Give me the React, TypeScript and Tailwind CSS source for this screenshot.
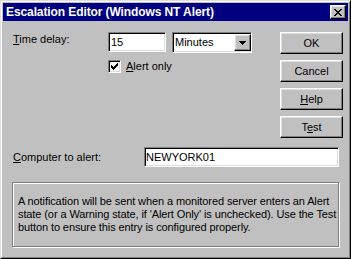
import React from "react";

const raised =
  "border border-t-white border-l-white border-r-black border-b-black shadow-[inset_-1px_-1px_0_#808080,inset_1px_1px_0_#dfdfdf]";
const sunken =
  "border border-t-[#808080] border-l-[#808080] border-r-white border-b-white shadow-[inset_1px_1px_0_#000,inset_-1px_-1px_0_#dfdfdf]";

function Btn({ children }: { children: React.ReactNode }) {
  return (
    <div className={`${raised} bg-[#c0c0c0] w-[63px] h-[22px] flex items-center justify-center text-black`}>
      {children}
    </div>
  );
}

export default function App() {
  return (
    <div
      className="w-[351px] h-[259px] bg-[#c0c0c0] border border-t-[#dfdfdf] border-l-[#dfdfdf] border-r-black border-b-black text-[11px] leading-[13px] text-black"
      style={{ fontFamily: '"Liberation Sans", Arial, sans-serif' }}
    >
      <div className="h-full border border-t-white border-l-white border-r-[#808080] border-b-[#808080] p-px flex flex-col">
        {/* Title bar */}
        <div className="h-[18px] bg-[#000080] flex items-center pl-[3px] pr-[2px]">
          <span className="text-white font-bold text-[12px] leading-[14px] whitespace-nowrap tracking-[-0.1px]">
            Escalation Editor (Windows NT Alert)
          </span>
          <div className={`${raised} ml-auto bg-[#c0c0c0] w-[16px] h-[14px] flex items-center justify-center`}>
            <svg width="8" height="7" viewBox="0 0 8 7" shapeRendering="crispEdges">
              <path
                d="M0 0h2v1H0zM6 0h2v1H6zM1 1h2v1H1zM5 1h2v1H5zM2 2h4v1H2zM3 3h2v1H3zM2 4h4v1H2zM1 5h2v1H1zM5 5h2v1H5zM0 6h2v1H0zM6 6h2v1H6z"
                fill="#000"
              />
            </svg>
          </div>
        </div>

        {/* Top section */}
        <div className="flex items-start mt-[11px] pl-[10px]">
          <div className="flex flex-col">
            <div className="flex items-start">
              <div className="w-[95px] pt-[1px] whitespace-nowrap">
                <span className="underline">T</span>ime delay:
              </div>
              <div className={`${sunken} bg-white w-[58px] h-[20px] flex items-center pl-[2px]`}>15</div>
              <div className={`${sunken} bg-white w-[80px] h-[21px] ml-[6px] flex items-center`}>
                <span className="pl-[2px] flex-1">Minutes</span>
                <div className={`${raised} bg-[#c0c0c0] w-[17px] h-[17px] flex items-center justify-center`}>
                  <svg width="7" height="4" viewBox="0 0 7 4" shapeRendering="crispEdges">
                    <path d="M0 0h7v1H0zM1 1h5v1H1zM2 2h3v1H2zM3 3h1v1H3z" fill="#000" />
                  </svg>
                </div>
              </div>
            </div>
            <div className="flex items-center mt-[7px] ml-[95px]">
              <div className={`${sunken} bg-white w-[13px] h-[13px] flex items-center justify-center`}>
                <svg width="7" height="7" viewBox="0 0 7 7" shapeRendering="crispEdges">
                  <path
                    d="M6 0h1v3H6zM5 1h1v3H5zM4 2h1v3H4zM3 3h1v3H3zM2 4h1v3H2zM1 3h1v3H1zM0 2h1v3H0z"
                    fill="#000"
                  />
                </svg>
              </div>
              <span className="ml-[5px] whitespace-nowrap">
                <span className="underline">A</span>lert only
              </span>
            </div>
          </div>
          <div className="ml-auto mr-[5px] flex flex-col gap-[6px]">
            <Btn>OK</Btn>
            <Btn>Cancel</Btn>
            <Btn>
              <span>
                <span className="underline">H</span>elp
              </span>
            </Btn>
            <Btn>
              <span>
                T<span className="underline">e</span>st
              </span>
            </Btn>
          </div>
        </div>

        {/* Computer row */}
        <div className="flex items-center mt-[9px] pl-[10px]">
          <div className="w-[131px] whitespace-nowrap">
            <span className="underline">C</span>omputer to alert:
          </div>
          <div className={`${sunken} bg-white w-[195px] h-[20px] flex items-center pl-[1px]`}>NEWYORK01</div>
        </div>

        {/* Info group */}
        <div className="mt-[15px] ml-[9px] w-[327px] h-[65px] border border-[#808080] shadow-[inset_1px_1px_0_#fff,1px_1px_0_#fff] pt-[12px] pl-[5px] whitespace-nowrap tracking-[-0.1px]">
          A notification will be sent when a monitored server enters an Alert
          <br />
          state (or a Warning state, if 'Alert Only' is unchecked). Use the Test
          <br />
          button to ensure this entry is configured properly.
        </div>
      </div>
    </div>
  );
}
